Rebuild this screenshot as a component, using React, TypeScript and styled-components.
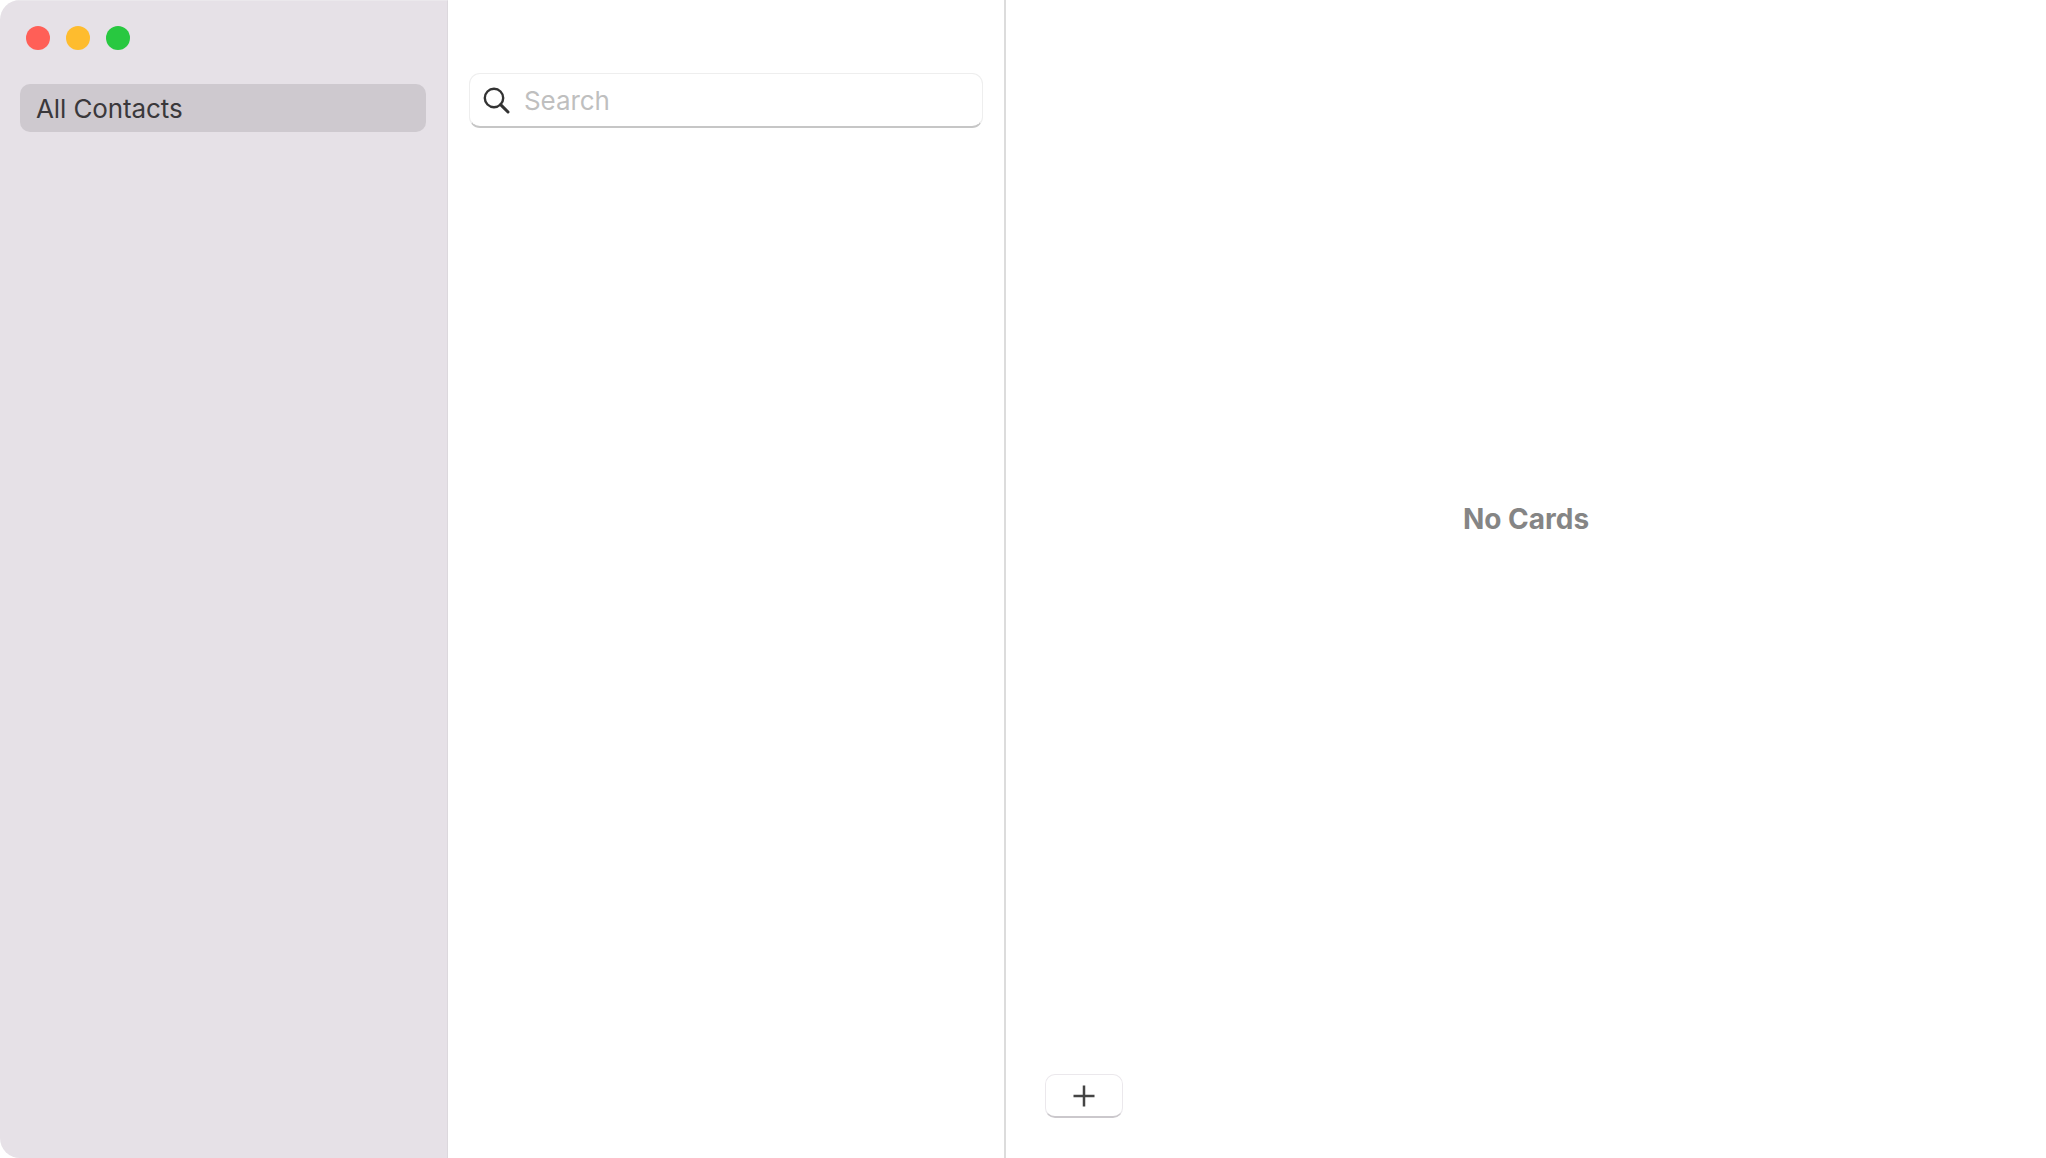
import styled, { createGlobalStyle } from "styled-components";

const GlobalStyle = createGlobalStyle`
  html, body {
    margin: 0;
    padding: 0;
    background: #ffffff;
  }
  * {
    box-sizing: border-box;
  }
`;

const Window = styled.div`
  width: 2046px;
  height: 1158px;
  display: flex;
  overflow: hidden;
  border-radius: 20px;
  background: #ffffff;
  font-family: Inter, "Liberation Sans", sans-serif;
`;

const Sidebar = styled.aside`
  width: 448px;
  flex: none;
  padding: 25px 21px 0 20px;
  background: #e6e1e7;
  border-top: 1px solid #ebe8ec;
  border-right: 1px solid #dcd8dd;
`;

const TrafficLights = styled.div`
  display: flex;
  gap: 16px;
  padding-left: 6px;
  margin-bottom: 34px;
`;

const Light = styled.span<{ $color: string }>`
  width: 24px;
  height: 24px;
  border-radius: 50%;
  background: ${(p) => p.$color};
`;

const SidebarItem = styled.div`
  height: 48px;
  display: flex;
  align-items: center;
  padding: 2px 0 0 16px;
  border-radius: 10px;
  background: #cec9cf;
  color: #3a383b;
  font-size: 26px;
  letter-spacing: -0.1px;
  line-height: 1;
`;

const ListPane = styled.section`
  width: 558px;
  flex: none;
  padding: 73px 21px 0 21px;
  border-right: 2px solid #dcdcdc;
`;

const SearchBox = styled.div`
  height: 55px;
  display: flex;
  align-items: center;
  gap: 14px;
  padding-left: 12px;
  border-radius: 11px;
  border: 1px solid #eeeeee;
  border-bottom: 2px solid #c6c6c6;
`;

const SearchPlaceholder = styled.span`
  padding-top: 1px;
  color: #bfbfbf;
  font-size: 26px;
  letter-spacing: -0.1px;
  line-height: 1;
`;

const DetailPane = styled.main`
  flex: 1;
  display: flex;
  flex-direction: column;
  padding: 0 0 40px 39px;
`;

const EmptyState = styled.div`
  flex: 1;
  display: flex;
  align-items: center;
  justify-content: center;
  padding-right: 39px;
  margin-bottom: 36px;
  color: #858585;
  font-size: 28px;
  font-weight: 700;
`;

const AddButton = styled.button`
  width: 78px;
  height: 44px;
  display: flex;
  align-items: center;
  justify-content: center;
  padding: 0;
  background: #ffffff;
  border: 1px solid #ebe8ec;
  border-bottom: 2px solid #cbc8cc;
  border-radius: 10px;
`;

const SearchIcon = () => (
  <svg width="28" height="28" viewBox="0 0 28 28" fill="none" stroke="#333333" strokeWidth="2.4">
    <circle cx="12" cy="12" r="9.2" />
    <path d="M18.6 18.6 L26 26" strokeWidth="3" strokeLinecap="round" />
  </svg>
);

const PlusIcon = () => (
  <svg width="22" height="22" viewBox="0 0 22 22" fill="none" stroke="#444444" strokeWidth="2.5">
    <path d="M11 0.5 V21.5 M0.5 11 H21.5" />
  </svg>
);

const App = () => (
  <>
    <GlobalStyle />
    <Window>
      <Sidebar>
        <TrafficLights>
          <Light $color="#ff5f57" />
          <Light $color="#febc2e" />
          <Light $color="#28c840" />
        </TrafficLights>
        <SidebarItem>All Contacts</SidebarItem>
      </Sidebar>
      <ListPane>
        <SearchBox>
          <SearchIcon />
          <SearchPlaceholder>Search</SearchPlaceholder>
        </SearchBox>
      </ListPane>
      <DetailPane>
        <EmptyState>No Cards</EmptyState>
        <AddButton>
          <PlusIcon />
        </AddButton>
      </DetailPane>
    </Window>
  </>
);

export default App;
